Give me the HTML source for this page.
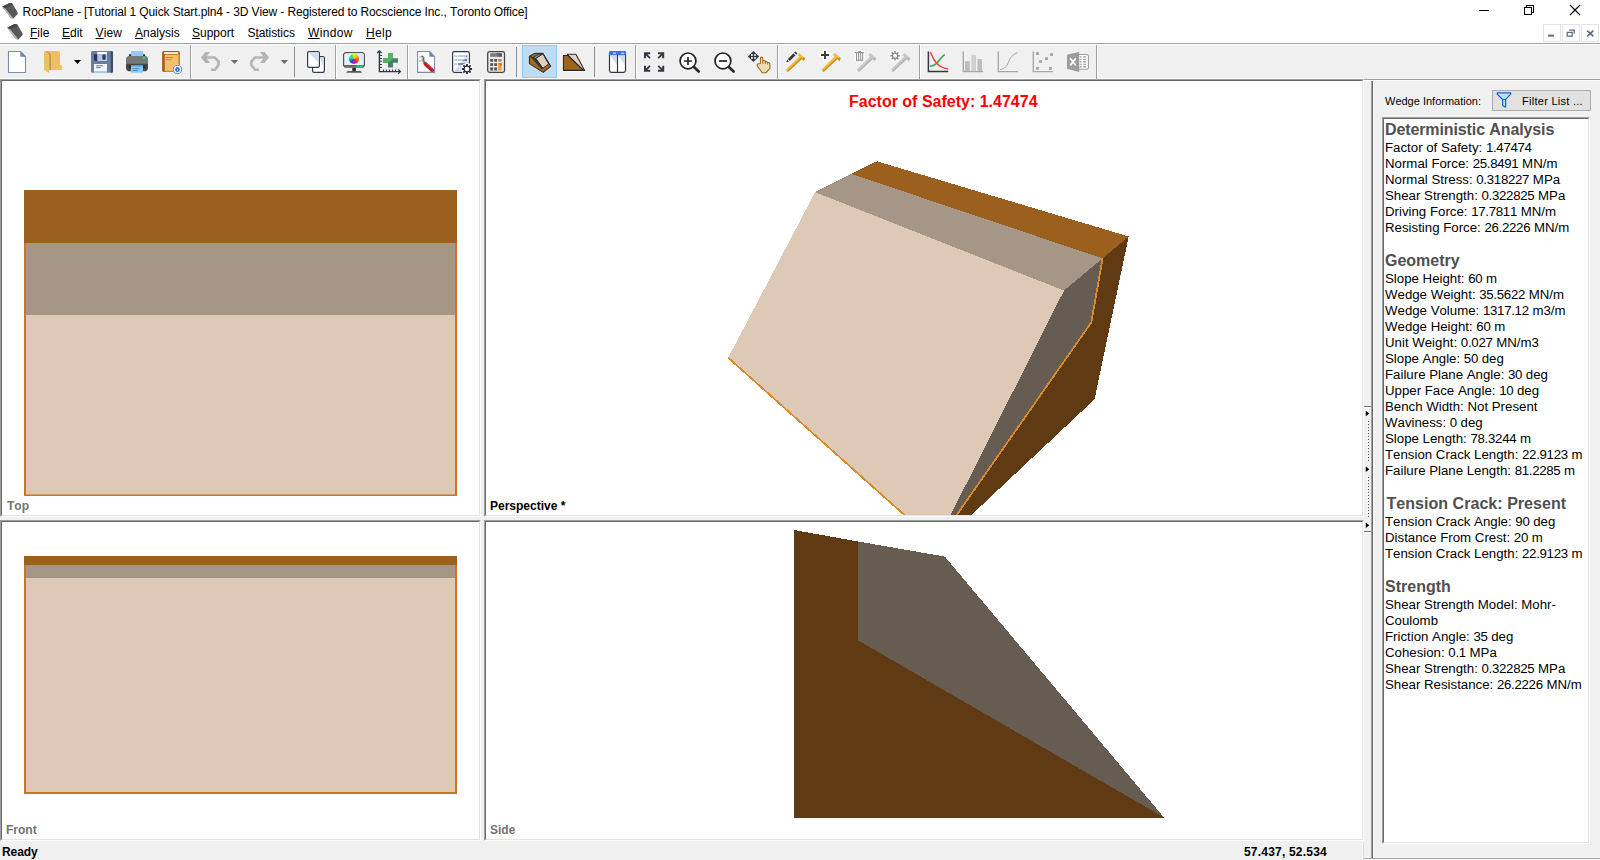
<!DOCTYPE html>
<html lang="en">
<head>
<meta charset="utf-8">
<title>RocPlane - [Tutorial 1 Quick Start.pln4 - 3D View]</title>
<style>
*{box-sizing:border-box;margin:0;padding:0}
html,body{width:1600px;height:860px;overflow:hidden;background:#f0f0f0}
body{position:relative;font-kerning:none;font-family:"Liberation Sans",sans-serif;font-size:12px;color:#000}
.abs{position:absolute}
#titlebar{left:0;top:0;width:1600px;height:22px;background:#fff}
#menubar{left:0;top:22px;width:1600px;height:21px;background:#fff}
#title{left:22.6px;top:5px;font-size:12px;line-height:15px;white-space:nowrap;letter-spacing:-0.115px}
.menu{top:26px;font-size:12px;line-height:15px;white-space:nowrap}
.menu u{text-decoration:underline;text-underline-offset:1px}
#tbline1{left:0;top:43px;width:1600px;height:1px;background:#a0a0a0}
#tbline2{left:0;top:44px;width:1600px;height:1px;background:#fff}
#toolbar{left:0;top:45px;width:1600px;height:33px;background:#f0f0f0}
#tbline3{left:0;top:78px;width:1364px;height:1px;background:#fff}
.sep{top:48px;width:1px;height:28px;background:#a0a0a0}
.sep:after{content:"";position:absolute;left:1px;top:0;width:1px;height:28px;background:#fff}
.pane{background:#fff;border-style:solid;border-width:2px;border-color:#696969 #fff #fff #696969;outline:0}
.pane:before{content:"";position:absolute;left:-2px;top:-2px;right:-2px;bottom:-2px;border-style:solid;border-width:1px;border-color:#a0a0a0 #fff #fff #a0a0a0;pointer-events:none}
.pane:after{content:"";position:absolute;left:-1px;top:-1px;right:-1px;bottom:-1px;border-style:solid;border-width:1px;border-color:#696969 #e3e3e3 #e3e3e3 #696969;pointer-events:none}
.vlabel{font-weight:bold;font-size:12px;line-height:14px;color:#737373;white-space:nowrap}
#statusbar{left:0;top:841px;width:1364px;height:19px;background:#f0f0f0}
#rpanel{left:1364px;top:79px;width:236px;height:781px;background:#f0f0f0}
#info{left:1382px;top:117px;width:208px;height:727px;background:#fff;border-style:solid;border-width:2px;border-color:#696969 #fff #fff #696969}
#info:before{content:"";position:absolute;left:-2px;top:-2px;right:-2px;bottom:-2px;border-style:solid;border-width:1px;border-color:#a0a0a0 #fff #fff #a0a0a0}
#info:after{content:"";position:absolute;left:-1px;top:-1px;right:-1px;bottom:-1px;border-style:solid;border-width:1px;border-color:#696969 #e3e3e3 #e3e3e3 #696969}
#infotext{left:1px;top:1px;width:203px;font-size:13.25px;line-height:16px;color:#000;letter-spacing:0}
#infotext b{font-weight:normal;letter-spacing:-0.3px}
#infotext h3{font-size:16px;line-height:20px;font-weight:bold;color:#505050;margin:0}
#infotext p{margin:0 0 15px 0}
</style>
</head>
<body>
<div id="titlebar" class="abs"></div>
<div id="menubar" class="abs"></div>
<div id="title" class="abs">RocPlane - [Tutorial 1 Quick Start.pln4 - 3D View - Registered to Rocscience Inc., Toronto Office]</div>

<div class="abs menu" style="left:30px"><u>F</u>ile</div>
<div class="abs menu" style="left:62px"><u>E</u>dit</div>
<div class="abs menu" style="left:95.6px;letter-spacing:0.1px"><u>V</u>iew</div>
<div class="abs menu" style="left:135px"><u>A</u>nalysis</div>
<div class="abs menu" style="left:192px"><u>S</u>upport</div>
<div class="abs menu" style="left:247.5px;letter-spacing:-0.07px">S<u>t</u>atistics</div>
<div class="abs menu" style="left:308px;letter-spacing:0.33px"><u>W</u>indow</div>
<div class="abs menu" style="left:366px;letter-spacing:0.35px"><u>H</u>elp</div>

<div id="tbline1" class="abs"></div>
<div id="tbline2" class="abs"></div>
<div id="toolbar" class="abs"></div>
<div id="tbline3" class="abs"></div>

<!-- TOOLBAR ICONS 1 -->
<svg class="abs" style="left:0;top:45px" width="1600" height="34" viewBox="0 45 1600 34">
<!-- band separators (full height) -->
<g shape-rendering="crispEdges">
<path d="M190.5 45V79M335.5 45V79M407.5 45V79M635.5 45V79M777.5 45V79M919.5 45V79M1096.5 45V79" stroke="#a0a0a0" stroke-width="1" fill="none"/>
<path d="M191.5 45V79M336.5 45V79M408.5 45V79M636.5 45V79M778.5 45V79M920.5 45V79M1097.5 45V79" stroke="#fff" stroke-width="1" fill="none"/>
<path d="M294.5 47V77M516.5 47V77M594.5 47V77" stroke="#8d8d8d" stroke-width="1" fill="none"/>
</g>
<!-- selected highlight -->
<rect x="522.5" y="45.5" width="34" height="32" fill="#c0dcf3" stroke="#90c8f6" stroke-width="1"/>

<!-- NEW -->
<path d="M8.5 51.5H20.5L25.5 56.5V72.5H8.5Z" fill="#fff" stroke="#7a8cab" stroke-width="1.1"/>
<path d="M20.3 51.3L25.8 56.8H20.3Z" fill="#6f84a4"/>
<!-- OPEN -->
<path d="M45 51H58.5Q60 51 60 52.5V65H61Q62.2 65 62.2 66.5V68.5Q62.2 70 60.8 70H49V54Z" fill="#ecc067"/>
<path d="M45 51Q50.8 51.8 51 56V70H49V55Z" fill="#c9943c"/>
<path d="M44 51.2Q49 52.5 49.3 55.5V72.8Q47 72.6 44 69.8Z" fill="#ecc067"/>
<path d="M74 60H81L77.5 64Z" fill="#000"/>
<!-- SAVE -->
<rect x="91" y="51" width="22" height="21.8" rx="1.6" fill="#6a7d9f"/>
<path d="M110.8 51H111.4Q113 51 113 52.6V71.2Q113 72.8 111.4 72.8H110.8Z" fill="#3f4b6a"/>
<rect x="97.2" y="52" width="9.8" height="2.2" fill="#fff"/>
<rect x="97.2" y="54.2" width="9.8" height="6.8" fill="#b5c6e0"/>
<path d="M94 54.2H97.2V61H95.5Q94 61 94 59.5Z" fill="#2d3658"/>
<rect x="102.4" y="54.4" width="3.2" height="5.4" rx="1.2" fill="#2d3658"/>
<rect x="94" y="64" width="13" height="8.8" fill="#f4f6fb"/>
<rect x="94" y="71.2" width="13" height="1.6" fill="#8fc5f5"/>
<rect x="96.1" y="65.3" width="6.8" height="1" fill="#5f7dab"/>
<rect x="96.1" y="67.1" width="4.6" height="1" fill="#5f7dab"/>
<!-- PRINT -->
<rect x="131" y="51" width="12" height="6" fill="#90c8f6"/>
<rect x="129" y="54.3" width="2" height="2" fill="#222"/>
<rect x="143.1" y="54.3" width="2" height="2" fill="#222"/>
<path d="M128 56H146L148 58V63.3H126V58Z" fill="#787878"/>
<path d="M126 63.2H148V69L146 71.2H128L126 69Z" fill="#484848"/>
<path d="M128 66.5L130 65H144L146 66.5L144 68.5H130Z" fill="#2e2e2e"/>
<rect x="142.7" y="56.8" width="2.5" height="2.4" rx=".6" fill="#00e676"/>
<rect x="131" y="65" width="12" height="7.8" fill="#90caf9"/>
<rect x="131" y="65" width="12" height="1.6" fill="#42a5f5"/>
<rect x="132.6" y="68.2" width="6.6" height=".9" fill="#3b82d6"/>
<rect x="132.6" y="70.1" width="5.4" height=".9" fill="#3b82d6"/>
<!-- BOOK -->
<rect x="162.1" y="51" width="17.8" height="21" rx="1.8" fill="#a85a1e"/>
<path d="M164.8 54.4H179.9V70.2Q179.9 72 178.2 72H164.8Z" fill="#c98528"/>
<rect x="163.9" y="52.2" width="14.4" height="1.8" rx=".6" fill="#fff"/>
<rect x="164.8" y="54.9" width="13.6" height="15.9" fill="#efc26b"/>
<rect x="166" y="57.1" width="6.8" height="1" fill="#c98a35"/>
<rect x="166" y="59.2" width="5.8" height="1" fill="#c98a35"/>
<circle cx="177.5" cy="69.5" r="4.9" fill="#f4f6fa" opacity=".85"/>
<circle cx="177.5" cy="69.5" r="4.1" fill="#fff" stroke="#3a6bc4" stroke-width=".9"/>
<circle cx="177.5" cy="69.7" r="2.4" fill="#3a6bc4"/>
<path d="M176.4 67.2L177.5 68.3L178.6 67.2" stroke="#3a6bc4" stroke-width=".8" fill="none"/>
<rect x="177.1" y="69" width=".85" height="1.7" fill="#fff"/>
<!-- UNDO -->
<path d="M200.9 57.4L205.4 52.1H210.1L206.7 56.2H214.8Q215.6 56.2 216.2 56.9L219.4 60.6Q220 61.3 220 62.2V64.6Q220 65.5 219.4 66.2L216.2 70.3Q215.6 71 214.8 71H211V68.5H214.2L217.3 64.6V62.3L214.2 58.7H206.7L210.1 62.9H205.4Z" fill="#b4b4b4"/>
<path d="M230.8 60H238.2L234.5 64Z" fill="#6d6d6d"/>
<!-- REDO -->
<path d="M269 57.4L264.5 52.1H259.8L263.2 56.2H255.1Q254.3 56.2 253.7 56.9L250.5 60.6Q249.9 61.3 249.9 62.2V64.6Q249.9 65.5 250.5 66.2L253.7 70.3Q254.3 71 255.1 71H258.9V68.5H255.7L252.6 64.6V62.3L255.7 58.7H263.2L259.8 62.9H264.5Z" fill="#b4b4b4"/>
<path d="M280.7 60H288.1L284.4 64Z" fill="#6d6d6d"/>
<!-- COPY -->
<rect x="312.6" y="56.6" width="11.8" height="15.8" rx="1.6" fill="#fff" stroke="#33384a" stroke-width="1.2"/>
<path d="M319.5 57.2H323.8V68.5Z" fill="#d3dbee"/>
<rect x="307.6" y="51.6" width="11.8" height="15.8" rx="1.6" fill="#fff" stroke="#33384a" stroke-width="1.2"/>
<path d="M308.5 52.3H318.8V62.8Z" fill="#d3dbee"/>
</svg>

<!-- TOOLBAR ICONS 2 -->
<svg class="abs" style="left:0;top:45px" width="1600" height="34" viewBox="0 45 1600 34">
<!-- MONITOR -->
<path d="M345.2 52.6H362.8L364.4 54.2V65.6L362.8 67.2H345.2L343.6 65.6V54.2Z" fill="#e6f2fc" stroke="#555" stroke-width="1.2"/>
<path d="M348 53.3H362.4L363.7 54.6V61Z" fill="#d3eafb"/>
<path d="M344.2 65H363.8V65.6L362.6 66.8H345.4L344.2 65.6Z" fill="#606060"/>
<rect x="356.4" y="65.3" width="2.9" height="1.9" rx=".7" fill="#00e676"/>
<rect x="359.8" y="65.3" width="2.9" height="1.9" rx=".7" fill="#00e676"/>
<rect x="352.3" y="67.8" width="3.6" height="3.3" fill="#2a2a2a"/>
<path d="M347.6 71H360.6L362.2 72.8H346.1Z" fill="#5a5a5a"/>
<!-- AXES -->
<g fill="none" stroke="#333744" stroke-width="1.4">
<path d="M379.4 51V71.6H400"/>
<path d="M377.2 53L379.4 50.8L381.6 53" stroke-width="1.3"/>
<path d="M398.2 69.4L400.4 71.6L398.2 73.8" stroke-width="1.3"/>
<path d="M380 55.5H382M380 58.5H382M380 61.3H382M380 64.5H382M380 67.5H382" stroke-width="1.1"/>
<path d="M383.5 69.5V71M386.5 69.5V71M389.5 69.5V71M392.5 69.5V71M395.5 69.5V71" stroke-width="1.1"/>
</g>
<path d="M388 53.2H393V58.2H398V62.7H393V67.6H388V62.7H383.1V58.2H388Z" fill="#47806a"/>
<path d="M388 53.2H393V58.2H393.4L388 62.7H383.1V58.2H388Z" fill="#57b35c"/>
<!-- WRENCH DOC -->
<path d="M417.6 51.5H429.6L434.5 56.5V72.4H417.6Z" fill="#fff" stroke="#7a8cab" stroke-width="1.1"/>
<path d="M429.4 51.3L434.8 56.8H429.4Z" fill="#6f84a4"/>
<path d="M425.2 63.6L432.3 70.3" stroke="#c8211f" stroke-width="3.7" stroke-linecap="round" fill="none"/>
<path d="M424.9 64.7L431.4 70.9" stroke="#a01414" stroke-width="1.1" stroke-dasharray="1 1" fill="none"/>
<path d="M425.9 63L432.6 69.3" stroke="#e04a48" stroke-width=".9" stroke-dasharray="1 1" fill="none"/>
<path d="M423.3 61.2L425 63" stroke="#4d5a5a" stroke-width="1.7" fill="none"/>
<path d="M419.2 56H422.6L423.9 57.3V61L423 61.8H419.2V60.4H421.4V57.4H419.2Z" fill="#b4b4b4"/>
<path d="M419.2 56H421V57.4H419.2Z M419.2 60.4H421V61.8H419.2Z" fill="#cdcdcd"/>
<path d="M421.4 56.1L422.7 56.2L423.8 57.4V61" stroke="#484848" stroke-width="1" fill="none"/>
<!-- SETTINGS DOC -->
<rect x="452.6" y="51.6" width="16.8" height="20.8" rx="1.8" fill="#fff" stroke="#333744" stroke-width="1.2"/>
<path d="M468.8 52.8V71.8H453.8Z" fill="#d3dbee"/>
<g fill="#b4c2da">
<rect x="454.2" y="55.2" width="2.8" height="1.6"/><rect x="454.2" y="59.2" width="2.8" height="1.6"/><rect x="454.2" y="63.2" width="2.8" height="1.6"/>
<rect x="458" y="55.2" width="9" height="1.6"/><rect x="458" y="59.2" width="9" height="1.6"/>
</g>
<path d="M465.4 56.8L467 55.2V56.8Z M462 60.8L465.5 59.2H467V60.8Z" fill="#5e7698"/>
<rect x="458" y="63.2" width="8" height="1.6" fill="#5e7698"/>
<circle cx="467" cy="69" r="5.9" fill="#fff"/>
<g stroke="#2b2d3a" stroke-width="1.9">
<path d="M467 63.9V74.1M461.9 69H472.1M463.4 65.4L470.6 72.6M463.4 72.6L470.6 65.4"/>
</g>
<circle cx="467" cy="69" r="3.5" fill="#2b2d3a"/>
<circle cx="467" cy="69" r="2.3" fill="#fff"/>
<!-- CALCULATOR -->
<rect x="487.7" y="51.6" width="16.8" height="20.8" rx="1.8" fill="#ebebeb" stroke="#444" stroke-width="1.3"/>
<rect x="490.2" y="53.2" width="11.8" height="3.6" fill="#7c7c7c"/>
<path d="M496 53.2H502V56.8H499.5Z" fill="#5c5c5c"/>
<g fill="#555">
<rect x="490.2" y="59" width="2.9" height="2.7"/><rect x="494.2" y="59" width="2.9" height="2.7"/>
<rect x="490.2" y="63.2" width="2.9" height="2.7"/><rect x="494.2" y="63.2" width="2.9" height="2.7"/>
<rect x="490.2" y="67.4" width="2.9" height="3.1"/><rect x="494.2" y="67.4" width="2.9" height="3.1"/>
</g>
<rect x="498.2" y="59" width="3.4" height="2.7" fill="#f07818"/>
<rect x="498.2" y="63.2" width="3.4" height="7.3" fill="#f59a2e"/>
<path d="M498.2 63.2H501.6V66Z" fill="#e65100"/>
<!-- 3D WEDGE -->
<path d="M529.4 56.3L535.1 53.2H542.9L550.7 66.4L543.2 72.4L529.4 63.6Z" fill="none" stroke="#d2e8fa" stroke-width="2.6" stroke-linejoin="round"/>
<path d="M529.4 56.3L535.1 53.2H542.9L550.7 66.4L543.2 72.4L529.4 63.6Z" fill="#a8671a" stroke="#23282e" stroke-width="1.1" stroke-linejoin="round"/>
<path d="M530.2 56.6L536 53.5H542.6L536.6 58.2L543.2 68.2L541.6 69.6Z" fill="#33363a"/>
<path d="M531.2 56L535.4 53.8L537.2 54.5L533 57Z" fill="#b5701c"/>
<path d="M534.2 57.2L538.6 54.6L540.2 55.2L535.8 58.2Z" fill="#8f8a85"/>
<path d="M535.8 58.4L542.9 53.9L548.7 64L542.9 68.3Z" fill="#e2cfbc" stroke="#23282e" stroke-width="1" stroke-linejoin="round"/>
<!-- 2D WEDGE -->
<path d="M563.4 55.5H567.4V54.3H575.9L584.7 70.5H563.4Z" fill="#fff" stroke="#fff" stroke-width="2.6" stroke-linejoin="round"/>
<path d="M563.4 55.5H568.1L583.6 70.4H563.4Z" fill="#a0631c" stroke="#23282e" stroke-width="1.1" stroke-linejoin="round"/>
<path d="M567.4 54.3H575.9L584.7 70.4H583.6L568.1 55.5Z" fill="#e3d0bd" stroke="#23282e" stroke-width="1.1" stroke-linejoin="round"/>
<!-- COLUMNS -->
<rect x="609.5" y="51.6" width="16" height="20.8" rx="1.8" fill="#fff" stroke="#333744" stroke-width="1.2"/>
<path d="M610.4 55.4H616.6V64.6Z M618.4 55.4H624.6V64.6Z" fill="#cfd8ec"/>
<path d="M609 53Q609 51 611 51H624Q626 51 626 53V55.2H609Z" fill="#4470dd"/>
<path d="M613 53.2H615.8M621.2 53.2H624" stroke="#fff" stroke-width="1"/>
<path d="M617.5 55V72.4" stroke="#333744" stroke-width="1.2"/>
<!-- FULLSCREEN -->
<g fill="#333744">
<path d="M644 52.2H650.2V54.2H647.4L650.6 57.4L649.3 58.7L646 55.5V58.3H644Z"/>
<path d="M664.2 52.2H658V54.2H660.8L657.6 57.4L658.9 58.7L662.2 55.5V58.3H664.2Z"/>
<path d="M644 71.8H650.2V69.8H647.4L650.6 66.6L649.3 65.3L646 68.5V65.7H644Z"/>
<path d="M664.2 71.8H658V69.8H660.8L657.6 66.6L658.9 65.3L662.2 68.5V65.7H664.2Z"/>
</g>
<!-- ZOOM IN -->
<path d="M694 67L698.7 71.5" stroke="#2a2a2a" stroke-width="2.7" stroke-linecap="round"/>
<circle cx="688" cy="60.9" r="7.9" fill="#fff" stroke="#222" stroke-width="1.7"/>
<path d="M684 61H692M688 57V65" stroke="#222" stroke-width="1.7" fill="none"/>
<!-- ZOOM OUT -->
<path d="M728.9 67L733.6 71.5" stroke="#2a2a2a" stroke-width="2.7" stroke-linecap="round"/>
<circle cx="722.9" cy="60.9" r="7.9" fill="#fff" stroke="#222" stroke-width="1.7"/>
<path d="M719 61H727" stroke="#222" stroke-width="1.7" fill="none"/>
<!-- PAN -->
<path d="M753.45 50.9L759.1 56.5L753.45 62.1L747.8 56.5Z" fill="#333744"/>
<g fill="#fafafa"><rect x="751" y="54.2" width="1.8" height="1.7"/><rect x="754.1" y="54.2" width="1.8" height="1.7"/><rect x="751" y="57.1" width="1.8" height="1.7"/><rect x="754.1" y="57.1" width="1.8" height="1.7"/></g>
<path d="M760.4 58.3Q760.4 57.1 761.5 57.1Q762.7 57.1 762.7 58.3V60.9Q763.2 60.4 764.2 60.5Q765.2 60.7 765.3 61.7Q766 61.3 766.8 61.6Q767.6 62 767.6 62.8Q768.4 62.4 769.1 62.9Q770 63.6 770 65V68.2L766.1 72.7H762.2L757.6 66.4Q756.6 64.8 757.4 64.3Q758.4 63.8 760.4 63.6Z" fill="#ecdcb4" stroke="#9a6a1c" stroke-width="1.05" stroke-linejoin="round"/>
<path d="M762.7 60.9V63.6M765.3 61.7V64M767.6 62.8V64.5" stroke="#9a6a1c" stroke-width="1" fill="none"/>
</svg>

<div class="abs" style="left:349.1px;top:53.9px;width:9.9px;height:9.9px;border-radius:50%;background:conic-gradient(#f4f020,#ffb000 50deg,#ff5a28 95deg,#f02040 140deg,#b020f0 185deg,#3040d8 225deg,#1890f0 260deg,#20e0c0 290deg,#30e050 320deg,#b8f020 350deg,#f4f020)"></div>
<!-- TOOLBAR ICONS 3 -->
<svg class="abs" style="left:0;top:45px" width="1600" height="34" viewBox="0 45 1600 34">
<defs>
<g id="bolt">
<path d="M0.3 14.8L2.2 17.5L16.8 4L14.2 1.4Z"/>
<path d="M11.7 0.4L13.9 -1.7L19.5 3.8L18 6.3Z"/>
</g>
<g id="boltsh">
<path d="M1.4 16.4L2.2 17.5L16.8 4L16 3Z"/>
<path d="M16.6 4.4L18.4 2.6L19.5 3.8L18 6.3Z"/>
</g>
</defs>
<!-- BOLT EDIT -->
<use href="#bolt" x="785.6" y="54.6" fill="#f1be2e"/>
<use href="#boltsh" x="785.6" y="54.6" fill="#c98a1a"/>
<path d="M787 61.8L797 51.8" stroke="#fff" stroke-width="4.6" stroke-linecap="round"/>
<path d="M788.8 60L796.4 52.4" stroke="#3a3a3a" stroke-width="2.9"/>
<path d="M786.2 62.6L787.2 59.8L789 61.6Z" fill="#3a3a3a"/>
<path d="M794.4 54.4L795.2 53.6" stroke="#fff" stroke-width="3"/>
<!-- BOLT ADD -->
<use href="#bolt" x="821.2" y="54.6" fill="#f1be2e"/>
<use href="#boltsh" x="821.2" y="54.6" fill="#c98a1a"/>
<path d="M820.6 55H829.4M825 50.6V59.4" stroke="#fff" stroke-width="3.6" stroke-linecap="round"/>
<path d="M821 55H829M825 51V59" stroke="#3a3a3a" stroke-width="1.9"/>
<!-- BOLT DELETE (disabled) -->
<use href="#bolt" x="856.6" y="54.6" fill="#c6c6c6"/>
<use href="#boltsh" x="856.6" y="54.6" fill="#b4b4b4"/>
<rect x="854.2" y="50.4" width="10.6" height="11.2" rx="1" fill="#fbfbfb"/>
<rect x="856" y="53" width="7.1" height="7.7" fill="#fff"/>
<path d="M856.5 53V60.6M858.6 53V60.6M860.65 53V60.6M862.6 53V60.6" stroke="#8a8a8a" stroke-width=".95" fill="none"/>
<path d="M856 60.3H863.1" stroke="#8a8a8a" stroke-width=".9"/>
<path d="M854.9 52.6H864.1" stroke="#8a8a8a" stroke-width="1"/>
<path d="M858.3 51.5H860.8" stroke="#8a8a8a" stroke-width="1"/>
<!-- BOLT SETTINGS (disabled) -->
<use href="#bolt" x="890.7" y="54.6" fill="#c6c6c6"/>
<use href="#boltsh" x="890.7" y="54.6" fill="#b4b4b4"/>
<circle cx="895" cy="55.8" r="5.8" fill="#fff"/>
<g stroke="#8a8a8a" stroke-width="1.5">
<path d="M895 51V60.6M890.2 55.8H899.8M891.6 52.4L898.4 59.2M891.6 59.2L898.4 52.4"/>
</g>
<circle cx="895" cy="55.8" r="3.1" fill="#8a8a8a"/>
<circle cx="895" cy="55.8" r="2" fill="#fff"/>
<!-- CHART -->
<path d="M928.4 51.6V71.6H948.2" fill="none" stroke="#333744" stroke-width="1.5"/>
<path d="M930.6 66.2Q934 65.8 936.2 63.6Q938.6 61 940.6 58.6Q942.4 56.4 944.2 55" fill="none" stroke="#4caf50" stroke-width="1.8" stroke-linecap="round"/>
<path d="M930.6 52.6Q933 59 936.4 63Q941 68 947.6 68.8" fill="none" stroke="#e8453c" stroke-width="1.5" stroke-linecap="round"/>
<!-- BAR CHART (disabled) -->
<rect x="965" y="61.2" width="4.8" height="10" fill="#bdbdbd"/>
<rect x="971.4" y="55" width="4.6" height="16.2" fill="#cfcfcf"/>
<rect x="977.5" y="59" width="4.5" height="12.2" fill="#bdbdbd"/>
<path d="M963.3 51.6V71.6H983.2" fill="none" stroke="#a8a8a8" stroke-width="1.4"/>
<!-- CURVE (disabled) -->
<path d="M998.3 51.6V71.6H1018.2" fill="none" stroke="#a8a8a8" stroke-width="1.4"/>
<path d="M1000.3 69.6Q1006.6 68.2 1008.4 62.4Q1010.2 55.6 1017.4 52.6" fill="none" stroke="#a8a8a8" stroke-width="1"/>
<!-- SCATTER (disabled) -->
<path d="M1033.3 51.6V71.6H1053.2" fill="none" stroke="#a8a8a8" stroke-width="1.4"/>
<g fill="#a4a4a4">
<rect x="1036.1" y="52.2" width="2.8" height="2.8"/><rect x="1050.1" y="53.2" width="2.8" height="2.8"/>
<rect x="1045.2" y="57.2" width="2.8" height="2.8"/><rect x="1039.1" y="60.1" width="2.8" height="2.8"/>
<rect x="1036" y="67" width="2.8" height="2.8"/><rect x="1049.1" y="67" width="2.8" height="2.8"/>
</g>
<!-- EXCEL (disabled) -->
<rect x="1076" y="54.5" width="12.4" height="14.8" rx="1.6" fill="#fff" stroke="#9c9c9c" stroke-width="1.1"/>
<g fill="#a6a6a6">
<rect x="1079.6" y="56.2" width="2" height="1.4"/><rect x="1083.2" y="56.2" width="2.9" height="1.4"/>
<rect x="1079.6" y="58.9" width="2" height="1.2"/><rect x="1083.2" y="58.9" width="2.9" height="1.2"/>
<rect x="1079.6" y="61" width="2" height="1.5"/><rect x="1083.2" y="61" width="2.9" height="1.5"/>
<rect x="1079.6" y="63.7" width="2" height="1.2"/><rect x="1083.2" y="63.7" width="2.9" height="1.2"/>
<rect x="1079.6" y="66" width="2" height="1.6"/><rect x="1083.2" y="66" width="2.9" height="1.6"/>
</g>
<path d="M1067 55.4Q1067 54.6 1067.8 54.4L1079.2 52V71.9L1067.8 69Q1067 68.8 1067 68Z" fill="#9c9c9c"/>
<path d="M1070.2 58.3L1075.8 65.6M1075.8 58.3L1070.2 65.6" stroke="#fff" stroke-width="1.7" fill="none"/>
</svg>

<!-- WINDOW CONTROLS / ICONS -->
<svg class="abs" style="left:0;top:0" width="1600" height="44" viewBox="0 0 1600 44">
<g id="appicon">
<path d="M2.3 6.6L9.8 3.1Q11.6 2.6 12.8 4.2L17.6 12.4Q18.2 13.6 17.2 14.6L13.6 18.2Q12.8 18.8 11.8 18.2L10.4 17.4Z" fill="#595959"/>
<path d="M2.2 6.8L5.2 8.2L13.4 18.4Q12.6 18.8 11.8 18.2L10.4 17.4Z" fill="#b4b4b4"/>
<path d="M2.3 6.6L9.8 3.1Q11.6 2.6 12.8 4.2L5.4 8.2Z" fill="#474747"/>
</g>
<use href="#appicon" x="5" y="21"/>
<rect x="1479" y="10" width="10" height="1" fill="#000" shape-rendering="crispEdges"/>
<path d="M1524.5 7.5H1531.5V14.5H1524.5Z M1526.5 7.5V5.5H1533.5V12.5H1531.5" fill="none" stroke="#000" stroke-width="1" shape-rendering="crispEdges"/>
<path d="M1570 5L1580 15M1580 5L1570 15" stroke="#000" stroke-width="1.1"/>
<g fill="#fff" stroke="#e4e4e4" stroke-width="1" shape-rendering="crispEdges">
<rect x="1543.5" y="24.5" width="17" height="17"/><rect x="1562.5" y="24.5" width="17" height="17"/><rect x="1581.5" y="24.5" width="17" height="17"/>
</g>
<rect x="1548" y="34.6" width="6" height="2" fill="#5d6b8a"/>
<path d="M1569.2 30.2H1574.2V33.4 M1567.2 32.4H1572.2V36.2H1567.2Z" fill="none" stroke="#5d6b8a" stroke-width="1.3"/>
<path d="M1587.2 30.6L1593.4 36.4M1593.4 30.6L1587.2 36.4" stroke="#5d6b8a" stroke-width="1.7"/>
</svg>
<!-- PANES -->
<div id="p-top" class="abs pane" style="left:0;top:79px;width:481px;height:438px">
  <svg class="abs" style="left:0;top:0" width="477" height="434" viewBox="2 81 477 434">
    <rect x="24" y="190" width="433" height="53" fill="#9b601e"/>
    <rect x="24" y="243" width="433" height="72" fill="#a59688"/>
    <rect x="24" y="315" width="433" height="181" fill="#ddc9b5"/>
    <path d="M25 243V496M456 243V496" fill="none" stroke="#c8781a" stroke-width="2"/><path d="M24 495.3H457" fill="none" stroke="#c8781a" stroke-width="1.4"/>
  </svg>
  <div class="abs vlabel" style="left:5px;top:418px">Top</div>
</div>
<div id="p-persp" class="abs pane" style="left:484px;top:79px;width:880px;height:438px">
  <svg class="abs" style="left:0;top:0" width="876" height="434" viewBox="486 81 876 434" shape-rendering="crispEdges">
    <polygon points="877,161.3 1128.7,236.5 1102.6,258.4 851,173.8" fill="#9b601e"/>
    <polygon points="851,173.8 1102.6,258.4 1064,290.6 815.1,192.2" fill="#a59688"/>
    <polygon points="815.1,192.2 1064,290.6 940,536 928,536 728.2,357.7" fill="#ddc9b5"/>
    <polygon points="1064,290.6 1102.6,258.4 1091.3,322.4 942,536 940,536" fill="#675c52"/>
    <polygon points="1128.7,236.5 1102.6,258.4 1091.3,322.4 942,536 949,536 1094.5,399.3" fill="#5f3a12"/>
    <polyline points="1102.6,258.4 1091.3,322.4 942,536" fill="none" stroke="#d98a2a" stroke-width="1.8"/>
    <line x1="728.2" y1="357.7" x2="928" y2="536" stroke="#d98a2a" stroke-width="1.8"/>
  </svg>
  <div class="abs" style="left:363px;top:12px;font-weight:bold;font-size:16px;line-height:18px;color:#f00;white-space:nowrap">Factor of Safety: 1.47474</div>
  <div class="abs vlabel" style="left:4px;top:418px;color:#000">Perspective *</div>
</div>
<div id="p-front" class="abs pane" style="left:0;top:520px;width:481px;height:321px">
  <svg class="abs" style="left:0;top:0" width="477" height="317" viewBox="2 522 477 317">
    <rect x="24" y="556" width="433" height="9" fill="#9b601e"/>
    <rect x="24" y="565" width="433" height="13" fill="#a59688"/>
    <rect x="24" y="578" width="433" height="216" fill="#ddc9b5"/>
    <path d="M25 565V793H456V565" fill="none" stroke="#c8781a" stroke-width="2"/>
  </svg>
  <div class="abs vlabel" style="left:4px;top:301px">Front</div>
</div>
<div id="p-side" class="abs pane" style="left:484px;top:520px;width:880px;height:321px">
  <svg class="abs" style="left:0;top:0" width="876" height="317" viewBox="486 522 876 317" shape-rendering="crispEdges">
    <polygon points="794,530 858,541.5 858,640.3 1164,817.5 794,817.5" fill="#5f3a12"/>
    <polygon points="858,541.5 944.8,556.6 1164,817.5 858,640.3" fill="#675c52"/>
  </svg>
  <div class="abs vlabel" style="left:4px;top:301px">Side</div>
</div>

<!-- STATUS BAR -->
<div id="statusbar" class="abs"></div>
<div class="abs" style="left:2px;top:845px;font-weight:bold;font-size:12px;line-height:15px;letter-spacing:-0.1px">Ready</div>
<div class="abs" style="left:1244px;top:845px;font-weight:bold;font-size:12px;line-height:15px;white-space:nowrap;letter-spacing:0.2px">57.437, 52.534</div>
<div class="abs" style="left:1362px;top:842px;width:1px;height:18px;background:#f8f8f8"></div>
<div class="abs" style="left:1363px;top:842px;width:1px;height:18px;background:#dcdcdc"></div>

<!-- RIGHT PANEL -->
<div id="rpanel" class="abs"></div>
<div class="abs" style="left:1364px;top:79px;width:236px;height:1px;background:#a0a0a0"></div>
<div class="abs" style="left:1364px;top:80px;width:236px;height:1px;background:#fff"></div>
<div class="abs" style="left:1371px;top:81px;width:1px;height:777px;background:#a0a0a0"></div>
<div class="abs" style="left:1372px;top:81px;width:1px;height:777px;background:#696969"></div>
<div class="abs" style="left:1364px;top:857px;width:7px;height:1px;background:#f8f8f8"></div>
<div class="abs" style="left:1373px;top:81px;width:1px;height:777px;background:#fafafa"></div>
<div class="abs" style="left:1373px;top:857px;width:227px;height:1px;background:#f8f8f8"></div>
<div class="abs" style="left:1364px;top:858px;width:236px;height:1px;background:#a0a0a0"></div>
<div class="abs" style="left:1364px;top:859px;width:236px;height:1px;background:#fcfcfc"></div>
<div class="abs" style="left:1385px;top:94px;font-size:11px;line-height:14px;white-space:nowrap">Wedge Information:</div>
<div class="abs" style="left:1492px;top:90px;width:99px;height:21px;background:#e1e1e1;border:1px solid #adadad"></div>
<!-- FILTER ICON -->
<svg class="abs" style="left:1494px;top:91px" width="24" height="19" viewBox="1494 91 24 19">
<path d="M1497.3 92.8H1510.7V94.2L1505.6 99.4V107.2L1502.6 105.4V99.4L1497.3 94.2Z" fill="#bfe0fd" stroke="#1565c0" stroke-width="1.2" stroke-linejoin="round"/><path d="M1502.6 99.4H1505.6" stroke="#1565c0" stroke-width="1"/>
</svg>
<div class="abs" style="left:1522px;top:94px;font-size:11px;line-height:14px;white-space:nowrap;letter-spacing:0.27px">Filter List ...</div>

<div id="info" class="abs">
<div id="infotext" class="abs">
<h3 style="letter-spacing:-0.11px">Deterministic Analysis</h3>
<p>Factor of Safety: <b>1.47474</b><br>Normal Force: <b>25.8491</b> MN/m<br>Normal Stress: <b>0.318227</b> MPa<br>Shear Strength: <b>0.322825</b> MPa<br>Driving Force: <b>17.7811</b> MN/m<br>Resisting Force: <b>26.2226</b> MN/m</p>
<h3>Geometry</h3>
<p>Slope Height: <b>60</b> m<br>Wedge Weight: <b>35.5622</b> MN/m<br>Wedge Volume: <b>1317.12</b> m3/m<br>Wedge Height: <b>60</b> m<br>Unit Weight: <b>0.027</b> MN/m3<br>Slope Angle: <b>50</b> deg<br>Failure Plane Angle: <b>30</b> deg<br>Upper Face Angle: <b>10</b> deg<br>Bench Width: Not Present<br>Waviness: <b>0</b> deg<br>Slope Length: <b>78.3244</b> m<br>Tension Crack Length: <b>22.9123</b> m<br>Failure Plane Length: <b>81.2285</b> m</p>
<h3 style="padding-left:1.5px;letter-spacing:0.04px">Tension Crack: Present</h3>
<p>Tension Crack Angle: <b>90</b> deg<br>Distance From Crest: <b>20</b> m<br>Tension Crack Length: <b>22.9123</b> m</p>
<h3>Strength</h3>
<p>Shear Strength Model: Mohr-Coulomb<br>Friction Angle: <b>35</b> deg<br>Cohesion: <b>0.1</b> MPa<br>Shear Strength: <b>0.322825</b> MPa<br>Shear Resistance: <b>26.2226</b> MN/m</p>
</div>
</div>
<!-- SPLITTER HANDLE -->
<svg class="abs" style="left:1364px;top:400px" width="8" height="140" viewBox="1364 400 8 140">
<path d="M1364 406.5H1371M1364 531.5H1371" stroke="#707070" stroke-width="1" shape-rendering="crispEdges"/>
<path d="M1364 407.5H1371M1364 532.5H1371" stroke="#fff" stroke-width="1" shape-rendering="crispEdges"/>
<path d="M1365.8 410.7V416.3L1369.3 413.5Z M1365.8 466.5V472.1L1369.3 469.3Z M1365.8 522.5V528.1L1369.3 525.3Z" fill="#000"/>
<path d="M1368.5 421V462" stroke="#555" stroke-width="1" stroke-dasharray="1 2" shape-rendering="crispEdges"/>
<path d="M1368.5 477V518" stroke="#555" stroke-width="1" stroke-dasharray="1 2" shape-rendering="crispEdges"/>
<path d="M1367.5 420V461" stroke="#fff" stroke-width="1" stroke-dasharray="1 2" shape-rendering="crispEdges"/>
<path d="M1367.5 476V517" stroke="#fff" stroke-width="1" stroke-dasharray="1 2" shape-rendering="crispEdges"/>
</svg>
</body>
</html>
